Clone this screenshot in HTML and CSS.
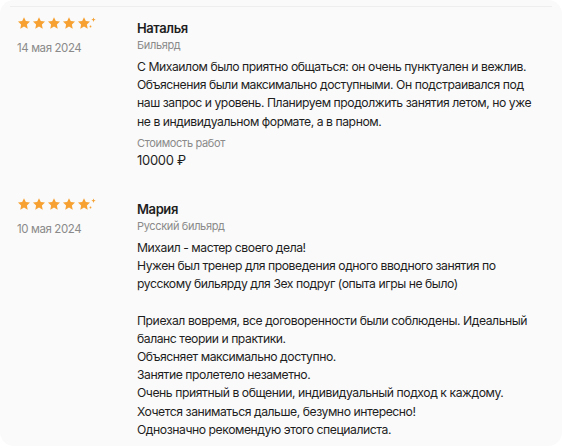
FILE: index.html
```html
<!DOCTYPE html>
<html lang="ru">
<head>
	<meta charset="UTF-8">
	<title>Отзывы</title>
	<link rel="stylesheet" href="styles.css">
</head>
<body>
	<div class="reviews">
		<div class="review">
			<div class="side">
				<div class="stars">
					<svg width="84" height="16" viewBox="0 0 84 16">
						<path class="st" d="M7 1.2l1.8 3.9 4.2.5-3.1 2.9.8 4.2L7 10.6 3.3 12.7l.8-4.2L1 5.6l4.2-.5z"/>
						<path class="st" transform="translate(15 0)" d="M7 1.2l1.8 3.9 4.2.5-3.1 2.9.8 4.2L7 10.6 3.3 12.7l.8-4.2L1 5.6l4.2-.5z"/>
						<path class="st" transform="translate(30 0)" d="M7 1.2l1.8 3.9 4.2.5-3.1 2.9.8 4.2L7 10.6 3.3 12.7l.8-4.2L1 5.6l4.2-.5z"/>
						<path class="st" transform="translate(45 0)" d="M7 1.2l1.8 3.9 4.2.5-3.1 2.9.8 4.2L7 10.6 3.3 12.7l.8-4.2L1 5.6l4.2-.5z"/>
						<path class="st" transform="translate(60 0)" d="M7 1.2l1.8 3.9 4.2.5-3.1 2.9.8 4.2L7 10.6 3.3 12.7l.8-4.2L1 5.6l4.2-.5z"/>
						<path class="st" d="M76.5 1.5l.6 1.6 1.6.6-1.6.6-.6 1.6-.6-1.6-1.6-.6 1.6-.6z"/>
						<circle class="st" cx="73.5" cy="10.5" r="0.9"/>
					</svg>
				</div>
				<div class="date">14 мая 2024</div>
			</div>
			<div class="main">
				<div class="name">Наталья</div>
				<div class="cat">Бильярд</div>
				<p class="text">С Михаилом было приятно общаться: он очень пунктуален и вежлив. Объяснения были максимально доступными. Он подстраивался под наш запрос и уровень. Планируем продолжить занятия летом, но уже не в индивидуальном формате, а в парном.</p>
				<div class="cat">Стоимость работ</div>
				<div class="price">10000 ₽</div>
			</div>
		</div>
		<div class="review">
			<div class="side">
				<div class="stars">
					<svg width="84" height="16" viewBox="0 0 84 16">
						<path class="st" d="M7 1.2l1.8 3.9 4.2.5-3.1 2.9.8 4.2L7 10.6 3.3 12.7l.8-4.2L1 5.6l4.2-.5z"/>
						<path class="st" transform="translate(15 0)" d="M7 1.2l1.8 3.9 4.2.5-3.1 2.9.8 4.2L7 10.6 3.3 12.7l.8-4.2L1 5.6l4.2-.5z"/>
						<path class="st" transform="translate(30 0)" d="M7 1.2l1.8 3.9 4.2.5-3.1 2.9.8 4.2L7 10.6 3.3 12.7l.8-4.2L1 5.6l4.2-.5z"/>
						<path class="st" transform="translate(45 0)" d="M7 1.2l1.8 3.9 4.2.5-3.1 2.9.8 4.2L7 10.6 3.3 12.7l.8-4.2L1 5.6l4.2-.5z"/>
						<path class="st" transform="translate(60 0)" d="M7 1.2l1.8 3.9 4.2.5-3.1 2.9.8 4.2L7 10.6 3.3 12.7l.8-4.2L1 5.6l4.2-.5z"/>
						<path class="st" d="M76.5 1.5l.6 1.6 1.6.6-1.6.6-.6 1.6-.6-1.6-1.6-.6 1.6-.6z"/>
						<circle class="st" cx="73.5" cy="10.5" r="0.9"/>
					</svg>
				</div>
				<div class="date">10 мая 2024</div>
			</div>
			<div class="main">
				<div class="name">Мария</div>
				<div class="cat">Русский бильярд</div>
				<p class="text">Михаил - мастер своего дела!<br>Нужен был тренер для проведения одного вводного занятия по русскому бильярду для 3ех подруг (опыта игры не было)<br><br>Приехал вовремя, все договоренности были соблюдены. Идеальный баланс теории и практики.<br>Объясняет максимально доступно.<br>Занятие пролетело незаметно.<br>Очень приятный в общении, индивидуальный подход к каждому.<br>Хочется заниматься дальше, безумно интересно!<br>Однозначно рекомендую этого специалиста.</p>
			</div>
		</div>
	</div>
</body>
</html>
```

FILE: styles.css
```css
* { margin: 0; padding: 0; box-sizing: border-box; }
body {
	background-color: #fff;
	font-family: Inter, "Noto Sans", sans-serif;
	color: #1e1e1e;
}
.reviews {
	background-color: #fafafa;
	border-radius: 14px;
	padding: 6px 10px 0;
	height: 446px;
	overflow: hidden;
}
.review {
	display: grid;
	grid-template-columns: 120px 1fr;
	padding: 9px 7px 19px;
}
.review:first-child {
	border-top: 1px solid #eeeeee;
}
.stars svg {
	display: block;
}
.st {
	fill: #f6a132;
}
.date {
	margin-top: 9px;
	font-size: 11.5px;
	letter-spacing: -0.4px;
	color: #8a8a8a;
}
.main {
	padding-top: 3px;
	padding-right: 8px;
}
.name {
	font-size: 13px;
	font-weight: 600;
	letter-spacing: -0.4px;
	line-height: 18px;
}
.cat {
	font-size: 11px;
	letter-spacing: -0.35px;
	color: #8a8a8a;
	line-height: 16px;
}
.text {
	font-size: 12.2px;
	letter-spacing: -0.45px;
	line-height: 18.2px;
	margin: 5px 0 4px;
}
.price {
	font-size: 13px;
	letter-spacing: -0.3px;
	line-height: 18px;
}
```
